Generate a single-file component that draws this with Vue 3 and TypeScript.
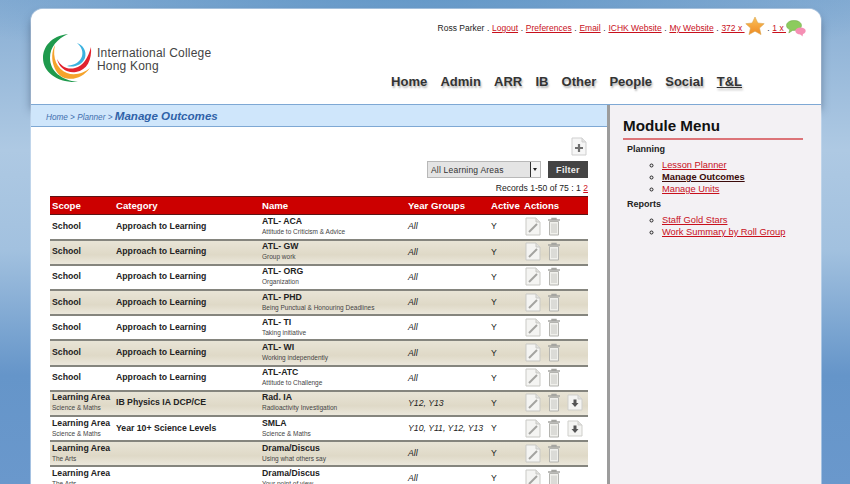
<script setup lang="ts">
interface Outcome {
  scope: string
  scopeSub?: string
  category: string
  name: string
  sub: string
  years: string
  move?: boolean
}

const topLinks = ['Logout', 'Preferences', 'Email', 'ICHK Website', 'My Website']
const navItems = ['Home', 'Admin', 'ARR', 'IB', 'Other', 'People', 'Social', 'T&L']

const outcomes: Outcome[] = [
  { scope: 'School', category: 'Approach to Learning', name: 'ATL- ACA', sub: 'Attitude to Criticism & Advice', years: 'All' },
  { scope: 'School', category: 'Approach to Learning', name: 'ATL- GW', sub: 'Group work', years: 'All' },
  { scope: 'School', category: 'Approach to Learning', name: 'ATL- ORG', sub: 'Organization', years: 'All' },
  { scope: 'School', category: 'Approach to Learning', name: 'ATL- PHD', sub: 'Being Punctual & Honouring Deadlines', years: 'All' },
  { scope: 'School', category: 'Approach to Learning', name: 'ATL- TI', sub: 'Taking initiative', years: 'All' },
  { scope: 'School', category: 'Approach to Learning', name: 'ATL- WI', sub: 'Working independently', years: 'All' },
  { scope: 'School', category: 'Approach to Learning', name: 'ATL-ATC', sub: 'Attitude to Challenge', years: 'All' },
  { scope: 'Learning Area', scopeSub: 'Science & Maths', category: 'IB Physics IA DCP/CE', name: 'Rad. IA', sub: 'Radioactivity Investigation', years: 'Y12, Y13', move: true },
  { scope: 'Learning Area', scopeSub: 'Science & Maths', category: 'Year 10+ Science Levels', name: 'SMLA', sub: 'Science & Maths', years: 'Y10, Y11, Y12, Y13', move: true },
  { scope: 'Learning Area', scopeSub: 'The Arts', category: '', name: 'Drama/Discus', sub: 'Using what others say', years: 'All' },
  { scope: 'Learning Area', scopeSub: 'The Arts', category: '', name: 'Drama/Discus', sub: 'Your point of view', years: 'All' },
]

const menu = [
  { title: 'Planning', links: ['Lesson Planner', 'Manage Outcomes', 'Manage Units'] },
  { title: 'Reports', links: ['Staff Gold Stars', 'Work Summary by Roll Group'] },
]
</script>

<template>
  <div class="page">
    <div class="wrap">
      <header class="header">
        <div class="logo">
          <svg width="50" height="50" viewBox="0 0 50 50" class="logo-mark">
            <path d="M25 0 C8 2 0 13 0 24 C0 38 14 49 35 48 C18 46 7 37 7 24 C7 13 14 5 25 0 Z" fill="#1f9a4d" />
            <path d="M12 11 C9 24 14 35 24 39 C32 42 41 39 47 34 C41 42 33 46 24 44.5 C12 43 5 24 12 11 Z" fill="#f5a32c" />
            <path d="M14 25 C18 33 25 36 32 34 C40 32 45 24 48 13 C49 26 44 36 33 38 C24 39.5 16 34 14 25 Z" fill="#e2232e" />
            <path d="M34 9 C40 14 41 21 37 26 C34 30 29 31 24 32 C31 34 39 31 42 24 C44 17 40 11 34 9 Z" fill="#3bb2df" />
          </svg>
          <div class="logo-text">International College<br>Hong Kong</div>
        </div>
        <div class="header-right">
          <div class="top-links">
            <span>Ross Parker</span>
            <template v-for="link in topLinks" :key="link">
              <span class="dot">.</span><a href="#">{{ link }}</a>
            </template>
            <span class="dot">.</span><a href="#">372 x </a>
            <svg class="star" width="20" height="20" viewBox="0 0 20 20">
              <defs>
                <linearGradient id="starFill" x1="0" y1="0" x2="0" y2="1">
                  <stop offset="0" stop-color="#fbc25a" />
                  <stop offset="1" stop-color="#ef8a22" />
                </linearGradient>
              </defs>
              <path d="M10 1 L12.8 7 L19.2 7.7 L14.5 12 L16 18.6 L10 15.2 L4 18.6 L5.5 12 L0.8 7.7 L7.2 7 Z" fill="url(#starFill)" stroke="#d9a653" stroke-width="0.6" />
            </svg>
            <span class="dot">.</span><a href="#">1 x </a>
            <svg class="chat" width="20" height="17" viewBox="0 0 20 17">
              <path d="M8 0.5 C12.5 0.5 15.5 2.6 15.5 5.5 C15.5 8.4 12.5 10.4 8.5 10.4 L6.6 10.4 L2.8 13 L3.8 9.6 C1.6 8.8 0.5 7.2 0.5 5.5 C0.5 2.6 3.5 0.5 8 0.5 Z" fill="#8ccb5e" stroke="#6aa845" stroke-width="0.5" />
              <ellipse cx="14.5" cy="11" rx="5.2" ry="3.4" fill="#f58fb4" />
              <path d="M14 14 L16.5 16.5 L17 13.5 Z" fill="#f58fb4" />
            </svg>
          </div>
          <nav class="nav">
            <a v-for="item in navItems" :key="item" href="#" :class="{ current: item === 'T&L' }">{{ item }}</a>
          </nav>
        </div>
      </header>

      <div class="body">
        <main class="main">
          <div class="crumbs">
            <span>Home &gt; Planner &gt; </span><strong>Manage Outcomes</strong>
          </div>
          <div class="content">
            <div class="add-row">
              <svg width="16" height="19" viewBox="0 0 16 19">
                <path d="M1 1 H11 L15 5 V18 H1 Z" fill="#f6f6f6" stroke="#cfcfcf" />
                <path d="M11 1 V5 H15" fill="#e4e4e4" stroke="#cfcfcf" />
                <path d="M8 7 V15 M4 11 H12" stroke="#6f6f6f" stroke-width="2.2" />
              </svg>
            </div>
            <div class="filter-row">
              <div class="select">
                <span>All Learning Areas</span>
                <i class="select-arrow"></i>
              </div>
              <button type="button" class="filter-btn">Filter</button>
            </div>
            <div class="records">Records 1-50 of 75 : 1 <a href="#">2</a></div>

            <table class="table">
              <colgroup>
                <col class="c-scope">
                <col class="c-cat">
                <col class="c-name">
                <col class="c-year">
                <col class="c-active">
                <col>
              </colgroup>
              <thead>
                <tr>
                  <th>Scope</th>
                  <th>Category</th>
                  <th>Name</th>
                  <th>Year Groups</th>
                  <th>Active</th>
                  <th>Actions</th>
                </tr>
              </thead>
              <tbody>
                <tr v-for="(row, i) in outcomes" :key="i" :class="i % 2 ? 'even' : 'odd'">
                  <td>
                    <b>{{ row.scope }}</b>
                    <small v-if="row.scopeSub">{{ row.scopeSub }}</small>
                  </td>
                  <td><b>{{ row.category }}</b></td>
                  <td>
                    <b>{{ row.name }}</b>
                    <small>{{ row.sub }}</small>
                  </td>
                  <td class="years">{{ row.years }}</td>
                  <td class="active-cell">Y</td>
                  <td>
                    <div class="actions">
                      <svg width="16" height="19" viewBox="0 0 16 19">
                        <path d="M1 1 H11 L15 5 V18 H1 Z" fill="#f4f4f2" stroke="#c9c9c5" />
                        <path d="M11 1 V5 H15" fill="#e2e2df" stroke="#c9c9c5" />
                        <path d="M4 15 L12 7" stroke="#a3a3a0" stroke-width="2" />
                      </svg>
                      <svg width="14" height="19" viewBox="0 0 14 19">
                        <path d="M1 3 H13 M5 3 V1.5 H9 V3" fill="none" stroke="#a5a5a1" stroke-width="1.4" />
                        <path d="M2.5 4.5 H11.5 V18 H2.5 Z" fill="#f0f0ec" stroke="#b4b4b0" />
                        <path d="M5 6.5 V16 M7 6.5 V16 M9 6.5 V16" stroke="#c6c6c2" />
                      </svg>
                      <svg v-if="row.move" width="16" height="17" viewBox="0 0 16 17">
                        <path d="M1 1 H11 L15 5 V16 H1 Z" fill="#f4f4f2" stroke="#cfcfcb" />
                        <path d="M11 1 V5 H15" fill="#e2e2df" stroke="#cfcfcb" />
                        <path d="M6.5 5.5 H9.5 V9 H11.5 L8 13 L4.5 9 H6.5 Z" fill="#555" />
                      </svg>
                    </div>
                  </td>
                </tr>
              </tbody>
            </table>
          </div>
        </main>

        <aside class="side">
          <h2>Module Menu</h2>
          <template v-for="group in menu" :key="group.title">
            <h5>{{ group.title }}</h5>
            <ul>
              <li v-for="link in group.links" :key="link">
                <a href="#" :class="{ selected: link === 'Manage Outcomes' }">{{ link }}</a>
              </li>
            </ul>
          </template>
        </aside>
      </div>
    </div>
  </div>
</template>

<style>
html,
body {
  margin: 0;
  height: 100%;
  overflow: hidden;
}
</style>

<style scoped>
.page {
  height: 484px;
  overflow: hidden;
  padding-top: 9px;
  box-sizing: border-box;
  font-family: "Liberation Sans", Arial, sans-serif;
  color: #222;
  background:
    radial-gradient(ellipse 520px 90px at 420px -15px, #5f95c6 0%, rgba(95, 149, 198, 0) 100%),
    linear-gradient(180deg, #88aed4 0px, #aec9e3 150px, #a2c1df 250px, #6595c9 375px, #6a98cc 484px);
}

.wrap {
  width: 790px;
  margin-left: 31px;
  height: 500px;
  border-radius: 12px 12px 0 0;
  background: #fff;
  box-shadow: 0 0 0 1px rgba(205, 222, 240, 0.6);
}

.header {
  display: flex;
  justify-content: space-between;
  height: 95px;
  box-sizing: border-box;
  background: #fff;
  border-radius: 12px 12px 0 0;
  box-shadow: 0 6px 9px rgba(40, 60, 90, 0.5);
}

.logo {
  display: flex;
  align-items: center;
  gap: 4px;
  padding: 25px 0 0 12px;
  height: 50px;
}

.logo-mark {
  flex: none;
}

.logo-text {
  font-size: 12px;
  line-height: 13.5px;
  color: #444;
  letter-spacing: 0.2px;
  padding-top: 2px;
}

.header-right {
  display: flex;
  flex-direction: column;
  align-items: flex-end;
  padding-right: 15px;
}

.top-links {
  display: flex;
  align-items: center;
  height: 20px;
  margin-top: 9px;
  font-size: 8.5px;
  color: #222;
}

.top-links a {
  color: #c8101c;
  white-space: pre;
}

.dot {
  margin: 0 2.7px;
}

.star {
  margin: -4px 0 0 0;
}

.chat {
  margin: 1px 0 0 0;
}

.nav {
  display: flex;
  gap: 13.2px;
  margin-top: 35px;
  margin-right: 64px;
  font-size: 13px;
  font-weight: bold;
  line-height: 18px;
}

.nav a {
  color: #333;
  text-decoration: none;
  text-shadow: 1px 2px 2px rgba(0, 0, 0, 0.3);
}

.nav a.current {
  text-decoration: underline;
}

.body {
  display: flex;
  border-top: 1px solid #7ea8d4;
}

.main {
  width: 576px;
  flex: none;
  background: #fff;
}

.crumbs {
  height: 21px;
  line-height: 21px;
  padding-left: 15px;
  background: #cfe6fb;
  border-bottom: 1px solid #7ea8d4;
  color: #3f6fae;
  font-size: 8.2px;
  font-style: italic;
}

.crumbs strong {
  font-size: 11.6px;
  color: #2f62a8;
}

.content {
  padding: 10px 19px 0 19px;
}

.add-row {
  display: flex;
  justify-content: flex-end;
  height: 19px;
  padding-right: 1px;
}

.filter-row {
  display: flex;
  justify-content: flex-end;
  gap: 7px;
  margin-top: 5px;
}

.select {
  display: flex;
  align-items: center;
  justify-content: space-between;
  width: 114px;
  height: 17px;
  box-sizing: border-box;
  padding: 0 0 0 3px;
  background: #e4e4e4;
  border: 1px solid #b8b8b8;
  font-size: 8.5px;
  letter-spacing: 0.2px;
  color: #333;
}

.select-arrow {
  position: relative;
  width: 9px;
  height: 15px;
  background: #f4f4f4;
  border-left: 1px solid #333;
}

.select-arrow::after {
  content: "";
  position: absolute;
  left: 2px;
  top: 6px;
  border: 2.5px solid transparent;
  border-top: 3px solid #222;
}

.filter-btn {
  width: 40px;
  height: 17px;
  padding: 0;
  border: 0;
  background: #444;
  color: #eee;
  font: bold 9px "Liberation Sans", Arial, sans-serif;
  letter-spacing: 0.3px;
}

.records {
  margin-top: 3px;
  height: 14px;
  line-height: 14px;
  text-align: right;
  font-size: 8.6px;
}

.records a {
  color: #d0101c;
}

.table {
  width: 538px;
  margin-top: 1px;
  border-collapse: collapse;
  table-layout: fixed;
  font-size: 8.7px;
}

.c-scope { width: 64px; }
.c-cat { width: 146px; }
.c-name { width: 146px; }
.c-year { width: 83px; }
.c-active { width: 33px; }

.table th {
  height: 18px;
  padding: 0 2px;
  box-sizing: border-box;
  background: #cc0000;
  border-top: 1px solid #5c1414;
  border-bottom: 1px solid #5c1414;
  color: #fff;
  font-size: 9.6px;
  text-align: left;
}

.table td {
  height: 25.2px;
  padding: 0 2px 1px;
  box-sizing: border-box;
  white-space: nowrap;
  border-bottom: 2px solid #85857e;
  overflow: visible;
  color: #222;
}

.table tr.odd td {
  background: #fff;
}

.table tr.even td {
  background: linear-gradient(180deg, #e8e4d6, #dfd9c7 60%, #ebe7db);
}

.table b {
  display: block;
  font-size: 8.7px;
  line-height: 11px;
}

.table small {
  display: block;
  font-size: 6.5px;
  line-height: 10px;
  color: #444;
}

.years {
  font-style: italic;
}

.actions {
  display: flex;
  align-items: center;
  gap: 6px;
  margin-left: 1px;
}

.side {
  flex: 1;
  height: 400px;
  box-sizing: border-box;
  padding: 12px 18px 0 13px;
  background: #f3f1f4;
  border-left: 3px solid #9c9c9c;
}

.side h2 {
  margin: 0;
  padding-bottom: 3px;
  font-size: 15.2px;
  line-height: 18px;
  color: #111;
  border-bottom: 2px solid #dc7478;
}

.side h5 {
  margin: 2px 0 0 4px;
  font-size: 9px;
  line-height: 15px;
  color: #222;
}

.side ul {
  margin: 2px 0 0;
  padding: 0 0 0 39px;
  list-style: circle;
  font-size: 9.3px;
  line-height: 12px;
}

.side a {
  color: #c8101c;
}

.side a.selected {
  color: #3a0a0a;
  font-weight: bold;
}
</style>
